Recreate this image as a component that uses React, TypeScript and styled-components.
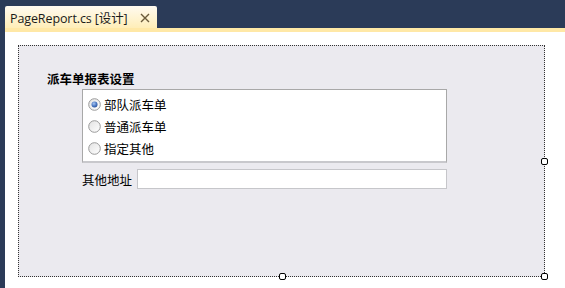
import { createGlobalStyle } from 'styled-components';
import styled from 'styled-components';

const GlobalStyle = createGlobalStyle`
  html, body {
    margin: 0;
    padding: 0;
    background: #ffffff;
  }
  * {
    box-sizing: border-box;
  }
`;

const options = ['部队派车单', '普通派车单', '指定其他'];

const RadioMark = ({ checked }: { checked: boolean }) => (
  <svg width="13" height="13" viewBox="0 0 13 13">
    <defs>
      <linearGradient id="rb" x1="0" y1="0" x2="1" y2="1">
        <stop offset="0" stopColor="#e2e2e2" />
        <stop offset="1" stopColor="#ffffff" />
      </linearGradient>
      <radialGradient id="dot" cx="0.4" cy="0.35" r="0.7">
        <stop offset="0" stopColor="#a9c6f2" />
        <stop offset="0.6" stopColor="#4b78c2" />
        <stop offset="1" stopColor="#2a4f99" />
      </radialGradient>
    </defs>
    <circle cx="6.5" cy="6.5" r="5.8" fill="url(#rb)" stroke="#9a9a9a" strokeWidth="1" />
    {checked && <circle cx="6.5" cy="6.5" r="3" fill="url(#dot)" />}
  </svg>
);

export default function App() {
  return (
    <>
      <GlobalStyle />
      <Frame>
        <TabStrip>
          <Tab>
            <TabTitle>PageReport.cs [设计]</TabTitle>
            <CloseIcon viewBox="0 0 10 10">
              <path d="M1 1 L9 9 M9 1 L1 9" stroke="#6a5a3a" strokeWidth="1.4" />
            </CloseIcon>
          </Tab>
        </TabStrip>
        <TabBand />
        <Editor>
          <Surface>
            <GroupTitle>派车单报表设置</GroupTitle>
            <OptionPanel>
              {options.map((label, i) => (
                <OptionRow key={label}>
                  <RadioMark checked={i === 0} />
                  <OptionText>{label}</OptionText>
                </OptionRow>
              ))}
            </OptionPanel>
            <AddressRow>
              <FieldLabel>其他地址</FieldLabel>
              <TextBox />
            </AddressRow>
            <Handle $x="right" $y="middle" />
            <Handle $x="center" $y="bottom" />
            <Handle $x="right" $y="bottom" />
          </Surface>
        </Editor>
      </Frame>
    </>
  );
}

const Frame = styled.div`
  width: 565px;
  height: 288px;
  background: #2b3b58;
  padding-left: 5px;
  display: flex;
  flex-direction: column;
  font-family: 'Noto Sans CJK SC', 'Liberation Sans', sans-serif;
  font-size: 12.5px;
  color: #000;
  overflow: hidden;
`;

const TabStrip = styled.div`
  height: 28px;
  display: flex;
  align-items: flex-end;
`;

const Tab = styled.div`
  width: 152px;
  height: 22px;
  display: flex;
  align-items: center;
  justify-content: space-between;
  padding: 0 7px 0 5px;
  background: linear-gradient(#fffaf0, #ffeeb8);
  border-radius: 2px 2px 0 0;
`;

const TabTitle = styled.span`
  font-family: 'Open Sans', 'Noto Sans CJK SC', sans-serif;
  font-size: 12.5px;
  color: #1a1a1a;
  white-space: nowrap;
  letter-spacing: -0.1px;
`;

const CloseIcon = styled.svg`
  width: 10px;
  height: 10px;
  margin-top: 1px;
`;

const TabBand = styled.div`
  height: 4px;
  background: #ffe8a6;
`;

const Editor = styled.div`
  flex: 1;
  background: #ffffff;
  padding: 13px 0 0 13px;
`;

const Surface = styled.div`
  position: relative;
  width: 527px;
  height: 232px;
  background: #ebeaef;
  border: 1px dotted #333;
  padding: 25px 0 0 28px;
`;

const GroupTitle = styled.div`
  font-weight: bold;
  font-size: 12.5px;
  line-height: 15px;
  height: 18px;
`;

const OptionPanel = styled.div`
  margin-left: 35px;
  width: 365px;
  height: 74px;
  background: #ffffff;
  border: 1px solid #a8a8a8;
  border-bottom: 2px solid #c8c8cc;
  padding: 3px 0 0 5px;
`;

const OptionRow = styled.div`
  height: 22px;
  display: flex;
  align-items: center;
  gap: 3px;
`;

const OptionText = styled.span`
  line-height: 15px;
`;

const AddressRow = styled.div`
  margin: 6px 0 0 35px;
  display: flex;
  align-items: center;
  gap: 5px;
`;

const FieldLabel = styled.span`
  white-space: nowrap;
  line-height: 15px;
`;

const TextBox = styled.div`
  width: 310px;
  height: 20px;
  background: #ffffff;
  border: 1px solid #c6c6ca;
`;

type HandleProps = {
  $x: 'center' | 'right';
  $y: 'middle' | 'bottom';
};

const Handle = styled.div<HandleProps>`
  position: absolute;
  width: 7px;
  height: 7px;
  background: #ffffff;
  border: 1px solid #000;
  border-radius: 2px;
  left: ${({ $x }) => ($x === 'right' ? 'calc(100% - 3px)' : 'calc(50% - 3px)')};
  top: ${({ $y }) => ($y === 'bottom' ? 'calc(100% - 3px)' : 'calc(50% - 3px)')};
`;
